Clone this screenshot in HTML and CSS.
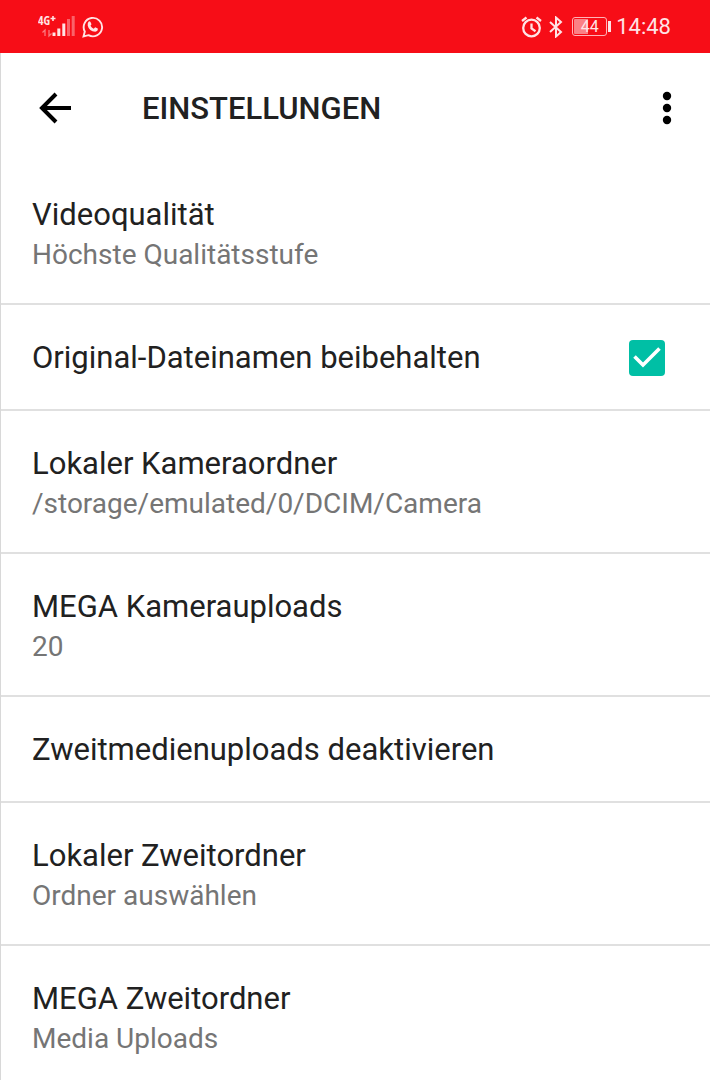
FILE: index.html
```
<!DOCTYPE html>
<html lang="de">
<head>
<meta charset="utf-8">
<meta name="viewport" content="width=device-width">
<title>Einstellungen</title>
<link rel="stylesheet" href="styles.css">
</head>
<body>
<div class="status">
  <div class="status-left">
    <svg width="38" height="27" viewBox="0 0 38 27" aria-hidden="true">
      <text class="net" x="0" y="12">4G</text>
      <path d="M12.500 5.500h5M15 3v5" stroke="#ffe3e5" stroke-width="1.600"/>
      <path d="M7 23v-6l-2.500 2.500M11 17v6l2.500-2.500" stroke="#ffe3e5" stroke-opacity=".5" stroke-width="1.300" fill="none"/>
      <path d="M14.500 19.500h3V23h-3zM19.300 15.500h3V23h-3zM24.300 10.500h3V23h-3z" fill="#ffe3e5"/>
      <path d="M29 6h3v17h-3zM33.700 3h3v20h-3z" fill="#ffe3e5" opacity=".4"/>
    </svg>
    <svg width="22" height="22" viewBox="0 0 22 22" aria-hidden="true">
      <path d="M1.500 20.500 2.800 15.500A9.200 9.200 0 1 1 6.500 19.200z" fill="none" stroke="#ffe3e5" stroke-width="1.900"/>
      <path d="M6.500 5.800q1.100-.9 2 .1l1 2.300-1 1.500q1 2 3.200 3l1.500-1.400 2.600 1.300q.3 2.700-2.500 3.100Q7 15.300 5.700 9.500 5.500 7 6.500 5.800z" fill="#ffe3e5"/>
    </svg>
  </div>
  <div class="status-right">
    <svg width="21" height="22" viewBox="0 0 21 22" aria-hidden="true" fill="none" stroke="#ffe3e5" stroke-width="2.300">
      <circle cx="10.500" cy="12" r="8.300"/><path d="M10.500 7.500v5l4 2.700M1 5l4.500-3.500M20 5l-4.500-3.500"/>
    </svg>
    <svg width="14" height="22" viewBox="0 0 14 22" aria-hidden="true">
      <path d="M1 6l11 10-5 4.500v-19L12 6 1 16" fill="none" stroke="#ffe3e5" stroke-width="2"/>
    </svg>
    <span class="battery">44</span>
    <span class="clock">14:48</span>
  </div>
</div>
<div class="screen">
<header class="bar">
  <button class="icon-button" aria-label="Zurück">
    <svg width="33" height="32" viewBox="0 0 33 32"><path d="M32 16H3M17 2 3 16l14 14" fill="none" stroke="#000" stroke-width="4"/></svg>
  </button>
  <h1>EINSTELLUNGEN</h1>
  <button class="icon-button" aria-label="Mehr">
    <svg width="10" height="34" viewBox="0 0 10 34"><circle cx="5" cy="5" r="4.200"/><circle cx="5" cy="17" r="4.200"/><circle cx="5" cy="29" r="4.200"/></svg>
  </button>
</header>
<main>
  <section class="row"><h2>Videoqualität</h2><p>Höchste Qualitätsstufe</p></section>
  <section class="row check-row"><label for="keep">Original-Dateinamen beibehalten</label>
    <span class="check"><input type="checkbox" id="keep" checked><svg viewBox="0 0 36 36" aria-hidden="true"><path d="M5.500 16.500l8.500 8.500L30.500 8.500" fill="none" stroke="#fff" stroke-width="3.600"/></svg></span></section>
  <section class="row"><h2>Lokaler Kameraordner</h2><p>/storage/emulated/0/DCIM/Camera</p></section>
  <section class="row"><h2>MEGA Kamerauploads</h2><p>20</p></section>
  <section class="row"><h2>Zweitmedienuploads deaktivieren</h2></section>
  <section class="row"><h2>Lokaler Zweitordner</h2><p>Ordner auswählen</p></section>
  <section class="row"><h2>MEGA Zweitordner</h2><p>Media Uploads</p></section>
</main>
</div>
</body>
</html>
```
FILE: styles.css
```
* { box-sizing: border-box; }
body { margin: 0; background: #fff; color: #212121; font-family: Roboto, "Liberation Sans", sans-serif; }
h1, h2, p { margin: 0; }
svg { display: block; }
.status { display: flex; justify-content: space-between; align-items: center; height: 53px; padding: 0 39px 0 38px; background: #f70d17; color: #ffe3e5; }
.status-left { display: flex; align-items: center; gap: 6px; }
.status-right { display: flex; align-items: center; gap: 7px; }
.net { font-size: 12px; font-weight: 700; fill: #ffe3e5; font-family: "Open Sans Condensed", Roboto, sans-serif; }
.battery { position: relative; width: 35px; height: 19px; margin: 0 2px; border: 1px solid #ffb3b7; border-radius: 3px; background: linear-gradient(90deg, #fb8085 44%, transparent 44%) content-box; padding: 1px; font-size: 16px; line-height: 16px; text-align: center; }
.battery::after { content: ""; position: absolute; right: -5px; top: 3px; width: 3px; height: 11px; background: #ffe3e5; }
.clock { font-size: 22px; line-height: 28px; }
.screen { border-left: 1px solid #d8d8d8; }
.bar { display: flex; align-items: center; height: 109px; padding: 0 38px; }
h1 { flex: 1; padding: 2px 0 0 70px; font-size: 31px; line-height: 36px; font-weight: 500; }
.icon-button { display: block; padding: 0; border: 0; background: none; }
.row { padding: 35px 31px 33px; border-bottom: 2px solid #e0e0e0; }
.row:last-child { border-bottom: 0; }
h2, label { display: block; font-size: 31px; line-height: 36px; font-weight: 400; }
p { padding-top: 9px; font-size: 28px; line-height: 28px; color: #757575; }
.row p { padding-top: 8px; padding-bottom: 1px; }
.check-row { display: flex; align-items: center; justify-content: space-between; }
.check { position: relative; width: 36px; height: 36px; margin-right: 14px; }
.check input { appearance: none; display: block; width: 36px; height: 36px; margin: 0; border-radius: 4px; background: #00bfa5; }
.check svg { position: absolute; inset: 0; pointer-events: none; }
```
